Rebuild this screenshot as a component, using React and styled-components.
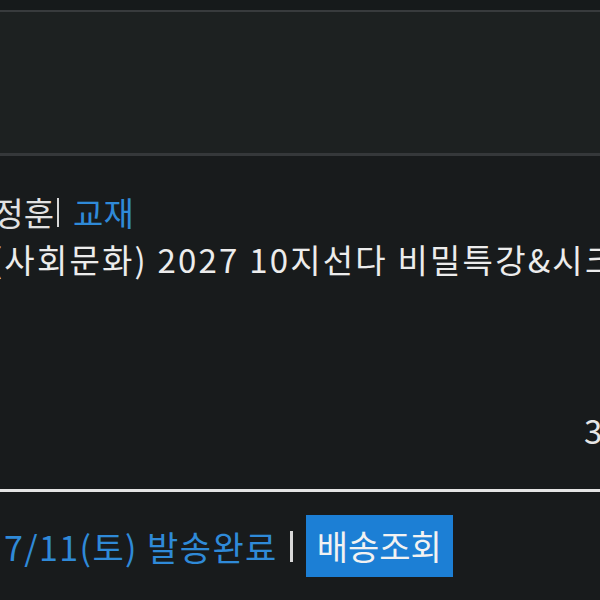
import styled, { createGlobalStyle } from "styled-components";

const GlobalStyle = createGlobalStyle`
  html, body {
    margin: 0;
    padding: 0;
    background: #181b1c;
    overflow: hidden;
  }
  body {
    font-family: "Noto Sans CJK KR", "Noto Sans", sans-serif;
  }
`;

const Page = styled.div`
  width: 600px;
  height: 600px;
  overflow: hidden;
  background: #181b1c;
  display: flex;
  flex-direction: column;
`;

const TopBar = styled.div`
  height: 10px;
  background: #161a1b;
  border-bottom: 2px solid #383b3d;
`;

const Panel = styled.div`
  height: 141px;
  background: #1d2121;
  border-bottom: 3px solid #35383a;
`;

const Item = styled.div`
  display: flex;
  flex-direction: column;
  white-space: nowrap;
`;

const Meta = styled.div`
  margin: 36px 0 0 -37px;
  font-size: 33px;
  line-height: 40px;
  color: #e2e2e2;
  display: flex;
  align-items: center;
`;

const Divider = styled.span`
  display: inline-block;
  flex-shrink: 0;
  width: ${(p) => p.$w || 2}px;
  height: ${(p) => p.$h || 29}px;
  margin: 0 ${(p) => p.$right || 0}px 0 ${(p) => p.$left || 0}px;
  background: #d8d8d8;
`;

const Blue = styled.span`
  color: #2f8ad8;
`;

const Title = styled.div`
  margin: 7px 0 0 -9px;
  font-size: 33px;
  line-height: 40px;
  letter-spacing: 2.2px;
  color: #ececec;
`;

const Price = styled.div`
  margin-top: 131px;
  padding-left: 584px;
  font-size: 33px;
  line-height: 40px;
  color: #e6e6e6;
`;

const Rule = styled.div`
  margin-top: 39px;
  height: 3px;
  background: #e4e4e4;
`;

const Shipping = styled.div`
  margin-top: 23px;
  padding-left: 4px;
  display: flex;
  align-items: center;
  font-size: 34px;
  letter-spacing: 1.4px;
  color: #2f8ad8;
`;

const TrackButton = styled.button`
  height: 62px;
  padding: 0 11px;
  border: none;
  background: #1c7fd5;
  color: #f2f2f2;
  font-family: inherit;
  font-size: 34px;
  line-height: 62px;
  cursor: pointer;
`;

export default function App() {
  return (
    <>
      <GlobalStyle />
      <Page>
        <TopBar />
        <Panel />
        <Item>
          <Meta>
            <span>임정훈</span>
            <Divider $left={3} $right={14} />
            <Blue>교재</Blue>
          </Meta>
          <Title>(사회문화) 2027 10지선다 비밀특강&amp;시크릿</Title>
          <Price>3,000원</Price>
        </Item>
        <Rule />
        <Shipping>
          <span>7/11(토) 발송완료</span>
          <Divider $w={3} $h={31} $left={12} $right={13} />
          <TrackButton>배송조회</TrackButton>
        </Shipping>
      </Page>
    </>
  );
}
